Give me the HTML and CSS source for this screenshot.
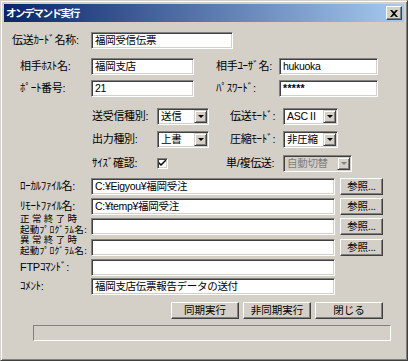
FILE: index.html
```html
<!DOCTYPE html>
<html lang="ja">
<head>
	<meta charset="UTF-8">
	<title>オンデマンド実行</title>
	<link rel="stylesheet" href="styles.css">
</head>
<body>
	<div class="window">
		<div class="titlebar">
			<span class="title">オンデマンド実行</span>
			<span class="close">
				<svg width="8" height="7" viewBox="0 0 8 7"><path d="M0 0h2l2 2 2-2h2L5 3.5 8 7H6L4 5 2 7H0l3-3.5z" fill="#000"/></svg>
			</span>
		</div>

		<div class="content">
			<div class="row r1">
				<span class="lbl w79">伝送ｶｰﾄﾞ名称:</span>
				<div class="field w142">福岡受信伝票</div>
			</div>

			<div class="row r2">
				<span class="lbl w71">相手ﾎｽﾄ名:</span>
				<div class="field w103">福岡支店</div>
				<span class="lbl w63 gap22">相手ﾕｰｻﾞ名:</span>
				<div class="field w99">hukuoka</div>
			</div>

			<div class="row r3">
				<span class="lbl w71">ﾎﾟｰﾄ番号:</span>
				<div class="field w103">21</div>
				<span class="lbl w63 gap22">ﾊﾟｽﾜｰﾄﾞ:</span>
				<div class="field w99 pw">*****</div>
			</div>

			<div class="row r4 sub">
				<span class="lbl w65">送受信種別:</span>
				<div class="combo w52"><span>送信</span><i class="arrow"></i></div>
				<span class="lbl w53 gap21">伝送ﾓｰﾄﾞ:</span>
				<div class="combo w55"><span>ASCⅡ</span><i class="arrow"></i></div>
			</div>

			<div class="row r5 sub">
				<span class="lbl w65">出力種別:</span>
				<div class="combo w52"><span>上書</span><i class="arrow"></i></div>
				<span class="lbl w53 gap21">圧縮ﾓｰﾄﾞ:</span>
				<div class="combo w55"><span>非圧縮</span><i class="arrow"></i></div>
			</div>

			<div class="row r6 sub">
				<span class="lbl w65">ｻｲｽﾞ確認:</span>
				<div class="checkcell">
					<span class="check">
						<svg width="7" height="7" viewBox="0 0 7 7"><path d="M0 2v2l2 2 5-5V-1L2 4z" fill="#000"/></svg>
					</span>
				</div>
				<span class="lbl w57 gap17">単/複伝送:</span>
				<div class="combo w69 disabled"><span>自動切替</span><i class="arrow"></i></div>
			</div>

			<div class="row r7">
				<span class="lbl w71">ﾛｰｶﾙﾌｧｲﾙ名:</span>
				<div class="field w244">C:¥Eigyou¥福岡受注</div>
				<button class="btn ref">参照...</button>
			</div>

			<div class="row r8">
				<span class="lbl w71">ﾘﾓｰﾄﾌｧｲﾙ名:</span>
				<div class="field w244">C:¥temp¥福岡受注</div>
				<button class="btn ref">参照...</button>
			</div>

			<div class="row r9">
				<span class="lbl w71 two"><span class="l1">正常終了時</span><span class="l2">起動ﾌﾟﾛｸﾞﾗﾑ名:</span></span>
				<div class="field w244"></div>
				<button class="btn ref">参照...</button>
			</div>

			<div class="row r10">
				<span class="lbl w71 two"><span class="l1">異常終了時</span><span class="l2">起動ﾌﾟﾛｸﾞﾗﾑ名:</span></span>
				<div class="field w244"></div>
				<button class="btn ref">参照...</button>
			</div>

			<div class="row r11">
				<span class="lbl w71">FTPｺﾏﾝﾄﾞ:</span>
				<div class="field w244"></div>
			</div>

			<div class="row r12">
				<span class="lbl w71">ｺﾒﾝﾄ:</span>
				<div class="field w244">福岡支店伝票報告データの送付</div>
			</div>

			<div class="actions">
				<button class="btn act">同期実行</button>
				<button class="btn act">非同期実行</button>
				<button class="btn act">閉じる</button>
			</div>

			<div class="status"></div>
		</div>
	</div>
</body>
</html>
```

FILE: styles.css
```css
html,
body {
	margin: 0;
	padding: 0;
	background: #D4D0C8;
}

body {
	font-family: "Liberation Sans", "Noto Sans CJK JP", sans-serif;
	font-size: 11px;
	color: #000;
}

.window {
	width: 408px;
	height: 361px;
	box-sizing: border-box;
	background: #D4D0C8;
	border-top: 1px solid #D4D0C8;
	border-left: 1px solid #D4D0C8;
	border-right: 1px solid #404040;
	border-bottom: 1px solid #404040;
	box-shadow: inset 1px 1px 0 #fff, inset -1px -1px 0 #808080;
	padding: 3px;
	display: flex;
	flex-direction: column;
}

.titlebar {
	height: 18px;
	flex: none;
	background: linear-gradient(to right, #0A246A, #A6CAF0);
	display: flex;
	align-items: center;
	justify-content: space-between;
	padding: 0 2px 0 2px;
}

.title {
	color: #fff;
	font-weight: bold;
	font-size: 10.5px;
	line-height: 18px;
	letter-spacing: -1.4px;
}

.close {
	width: 16px;
	height: 14px;
	box-sizing: border-box;
	background: #D4D0C8;
	border-top: 1px solid #fff;
	border-left: 1px solid #fff;
	border-right: 1px solid #404040;
	border-bottom: 1px solid #404040;
	box-shadow: inset -1px -1px 0 #808080;
	display: flex;
	align-items: center;
	justify-content: center;
}

.content {
	flex: 1;
	padding-left: 16px;
}

.row {
	display: flex;
	align-items: center;
	height: 17px;
}

.row.sub {
	padding-left: 72px;
}

.r1 { margin-top: 10px; margin-left: -8px; }
.r2 { margin-top: 9px; }
.r3 { margin-top: 5px; }
.r4 { margin-top: 11px; }
.r5 { margin-top: 6px; }
.r6 { margin-top: 7px; }
.r7 { margin-top: 6px; }
.r8 { margin-top: 3px; }
.r9 { margin-top: 3px; }
.r10 { margin-top: 4px; }
.r11 { margin-top: 3px; }
.r12 { margin-top: 2px; }

.lbl {
	white-space: nowrap;
	line-height: 13px;
	letter-spacing: -0.3px;
}

.lbl.two {
	align-self: flex-end;
	font-family: "Liberation Serif", "Noto Sans CJK JP", serif;
	font-size: 9.5px;
	line-height: 10.5px;
}

.lbl.two .l1,
.lbl.two .l2 {
	display: block;
	height: 10.5px;
}

.lbl.two .l1 {
	letter-spacing: 2.4px;
}

.lbl.two .l2 {
	letter-spacing: 0.3px;
}

.w53 { width: 53px; }
.w57 { width: 57px; }
.w63 { width: 63px; }
.w65 { width: 65px; }
.w71 { width: 71px; }
.w79 { width: 79px; }

.gap17 { margin-left: 17px; }
.gap21 { margin-left: 21px; }
.gap22 { margin-left: 22px; }

.field {
	height: 17px;
	box-sizing: border-box;
	background: #fff;
	border-top: 1px solid #808080;
	border-left: 1px solid #808080;
	border-right: 1px solid #fff;
	border-bottom: 1px solid #fff;
	box-shadow: inset 1px 1px 0 #404040, inset -1px -1px 0 #D4D0C8;
	padding: 0 3px;
	font-size: 10.5px;
	line-height: 15px;
	white-space: nowrap;
	overflow: hidden;
	letter-spacing: -0.3px;
}

.field.pw {
	font-weight: bold;
	letter-spacing: 0.3px;
}

.w99 { width: 99px; }
.w103 { width: 103px; }
.w142 { width: 142px; }
.w244 { width: 244px; }
.w52 { width: 52px; }
.w55 { width: 55px; }
.w69 { width: 69px; }

.combo {
	height: 17px;
	box-sizing: border-box;
	background: #fff;
	border-top: 1px solid #808080;
	border-left: 1px solid #808080;
	border-right: 1px solid #fff;
	border-bottom: 1px solid #fff;
	box-shadow: inset 1px 1px 0 #404040, inset -1px -1px 0 #D4D0C8;
	display: flex;
	align-items: center;
	justify-content: space-between;
	padding: 1px 1px 1px 3px;
	font-size: 10.5px;
}

.combo span {
	line-height: 13px;
	white-space: nowrap;
	letter-spacing: -0.3px;
}

.combo .arrow {
	width: 13px;
	height: 13px;
	box-sizing: border-box;
	background: #D4D0C8;
	border-top: 1px solid #D4D0C8;
	border-left: 1px solid #D4D0C8;
	border-right: 1px solid #404040;
	border-bottom: 1px solid #404040;
	box-shadow: inset 1px 1px 0 #fff, inset -1px -1px 0 #808080;
	position: relative;
	flex: none;
}

.combo .arrow::after {
	content: "";
	position: absolute;
	left: 3px;
	top: 4px;
	border-left: 3px solid transparent;
	border-right: 3px solid transparent;
	border-top: 3px solid #000;
}

.combo.disabled {
	background: #D4D0C8;
	color: #808080;
}

.combo.disabled .arrow::after {
	border-top-color: #808080;
}

.checkcell {
	width: 52px;
}

.check {
	display: flex;
	align-items: center;
	justify-content: center;
	width: 11px;
	height: 11px;
	box-sizing: border-box;
	background: #fff;
	border-top: 1px solid #808080;
	border-left: 1px solid #808080;
	border-right: 1px solid #fff;
	border-bottom: 1px solid #fff;
	box-shadow: inset 1px 1px 0 #404040, inset -1px -1px 0 #D4D0C8;
}

.btn {
	font-family: "Liberation Sans", "Noto Sans CJK JP", sans-serif;
	font-size: 10.5px;
	color: #000;
	background: #D4D0C8;
	box-sizing: border-box;
	border-top: 1px solid #fff;
	border-left: 1px solid #fff;
	border-right: 1px solid #404040;
	border-bottom: 1px solid #404040;
	box-shadow: inset -1px -1px 0 #808080;
	padding: 0;
	margin: 0;
	line-height: 13px;
}

.btn.ref {
	width: 43px;
	height: 17px;
	margin-left: 5px;
	letter-spacing: -0.3px;
}

.actions {
	display: flex;
	justify-content: flex-end;
	gap: 4px;
	margin-top: 7px;
	padding-right: 21px;
}

.btn.act {
	width: 68px;
	height: 17px;
}

.status {
	margin: 6px 0 0 13px;
	width: 358px;
	height: 16px;
	box-sizing: border-box;
	border-top: 1px solid #808080;
	border-left: 1px solid #808080;
	border-right: 1px solid #fff;
	border-bottom: 1px solid #fff;
}
```
